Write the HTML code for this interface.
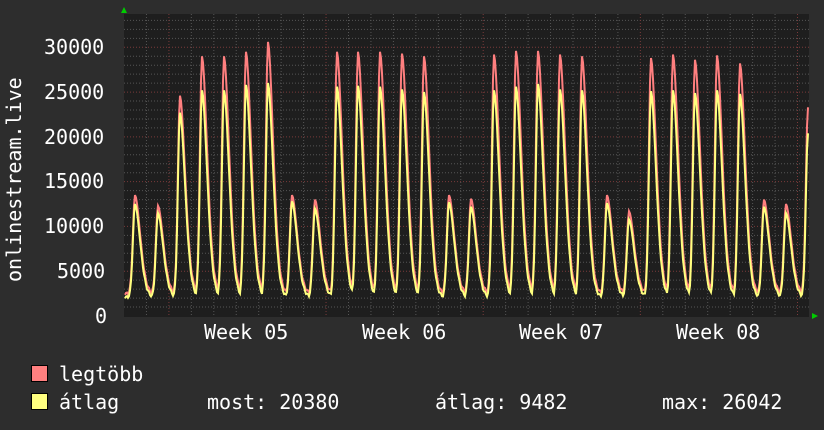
<!DOCTYPE html>
<html><head><meta charset="utf-8"><style>
html,body{margin:0;padding:0;background:#2d2d2d;}
body{width:824px;height:430px;overflow:hidden;position:relative;font-family:"DejaVu Sans Mono","Liberation Mono",monospace;color:#fff;}
.t{position:absolute;font-size:20px;white-space:pre;line-height:1;}
</style></head><body>
<svg id="g" width="824" height="430" style="position:absolute;left:0;top:0"></svg>
<div class="t" style="left:44px;top:37px">30000</div>
<div class="t" style="left:44px;top:82px">25000</div>
<div class="t" style="left:44px;top:127px">20000</div>
<div class="t" style="left:44px;top:171px">15000</div>
<div class="t" style="left:44px;top:216px">10000</div>
<div class="t" style="left:57px;top:261px">5000</div>
<div class="t" style="left:95px;top:306px">0</div>
<div class="t" style="left:-86px;top:172px;transform:rotate(-90deg);width:200px;text-align:center">onlinestream.live</div>
<div class="t" style="left:204px;top:322px">Week 05</div>
<div class="t" style="left:362px;top:322px">Week 06</div>
<div class="t" style="left:519px;top:322px">Week 07</div>
<div class="t" style="left:676px;top:322px">Week 08</div>
<div style="position:absolute;left:31px;top:365px;width:15px;height:15px;background:#ff7f7f;border:1px solid #000"></div>
<div style="position:absolute;left:31px;top:393px;width:15px;height:15px;background:#ffff7f;border:1px solid #000"></div>
<div class="t" style="left:59px;top:364px">legtöbb</div>
<div class="t" style="left:59px;top:392px">átlag</div>
<div class="t" style="left:207px;top:392px">most: 20380</div>
<div class="t" style="left:435px;top:392px">átlag: 9482</div>
<div class="t" style="left:662px;top:392px">max: 26042</div>
<script>
var s=document.getElementById('g'),h='';
var L=124,R=809,T=14,B=317;
h+='<rect x="'+L+'" y="'+T+'" width="'+(R-L)+'" height="'+(B-T)+'" fill="#1e1e1e"/>';
function Y(v){return 316-v*268.7/30000;}
for(var v=1000;v<=33000;v+=1000){var y=Y(v);if(y<T)break;var maj=v%5000==0;
h+='<line x1="'+L+'" x2="'+R+'" y1="'+y+'" y2="'+y+'" stroke="'+(maj?'#7a3a3a':'#555')+'" stroke-dasharray="1,2"/>';}
for(var i=0;i<31;i++){var x=124+(i+1)*22.45;if(x>R)break;var maj=(i%7==1);
h+='<line x1="'+x+'" x2="'+x+'" y1="'+T+'" y2="'+B+'" stroke="'+(maj?'#7a3a3a':'#555')+'" stroke-dasharray="1,2"/>';}
var P=[[135,13500,12500],[158,12300,11500],[180,24600,22700],[202,29000,25200],[224,29000,25200],[246,29500,25800],[268,30600,26000],[292,13500,12800],[315,13000,12000],[337,29500,25600],[358,29500,25700],[380,29500,25600],[402,29300,25300],[424,29000,25000],[449,13500,12700],[471,13100,12200],[494,29200,25200],[516,29600,25600],[538,29600,25900],[560,29200,25300],[582,29000,25200],[607,13500,12600],[629,11700,10800],[651,28800,25100],[673,29200,25200],[695,28600,24900],[717,29100,25200],[740,28200,24800],[764,13000,12200],[786,12500,11500],[808,23300,20400]];
function val(x,k,base){var m=base;for(var j=0;j<P.length;j++){var d=x-P[j][0],sh=0;
if(d<=0)sh=Math.exp(-Math.pow(-d/3,2));else sh=Math.exp(-Math.pow(d/7.5,1.8));
var v=base+(P[j][k]-base)*sh;if(v>m)m=v;}return m;}
function path(k,base){var d='';for(var x=L+1;x<=808;x++){var v=val(x,k,base+(Math.sin(x*1.7)*150));d+=(d?'L':'M')+x+','+Y(v).toFixed(1);}return d;}
h+='<path d="'+path(1,2500)+'" fill="none" stroke="#ff7f7f" stroke-width="2"/>';
h+='<path d="'+path(2,2100)+'" fill="none" stroke="#ffff7f" stroke-width="2"/>';
h+='<polygon points="121,13 127,13 124,7" fill="#0c0"/>';
h+='<polygon points="812,313 812,319 818,316" fill="#0c0"/>';
s.innerHTML=h;
</script>
</body></html>
